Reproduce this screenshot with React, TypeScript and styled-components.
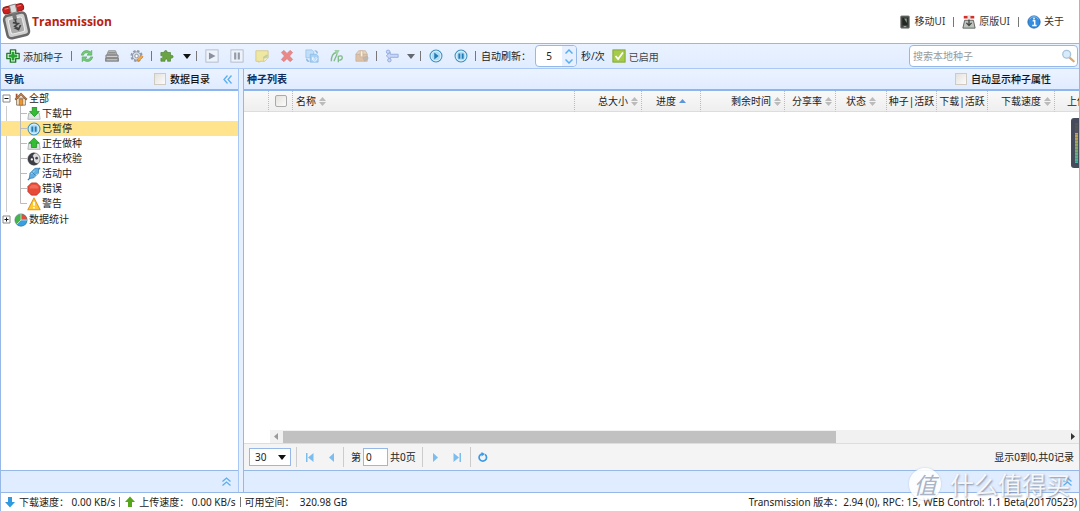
import React from "react";
import styled, { createGlobalStyle } from "styled-components";

const Global = createGlobalStyle`
  * { box-sizing: border-box; }
  html, body { margin: 0; padding: 0; background: #fff; }
  body, button, input, select {
    font-family: "Noto Sans", "Noto Sans CJK SC", sans-serif;
    font-size: 10px;
    color: #222;
  }
  svg { display: block; flex: none; }
`;

const Page = styled.div`
  position: relative;
  display: flex;
  flex-direction: column;
  min-height: 100vh;
  border-left: 1px solid #95b8e7;
  border-right: 1px solid #95b8e7;
  line-height: 15px;
  overflow: hidden;
`;

const Header = styled.header`
  display: flex;
  justify-content: space-between;
  height: 43px;
`;

const Brand = styled.div`
  display: flex;
  align-items: center;
  gap: 1px;
`;

const BrandName = styled.h1`
  margin: 0;
  font-family: "Open Sans", sans-serif;
  font-size: 12px;
  line-height: 18px;
  font-weight: 700;
  color: #b8200f;
`;

const TopLinks = styled.nav`
  display: flex;
  align-items: center;
  padding-right: 15px;
`;

const TopLink = styled.a`
  display: flex;
  align-items: center;
  gap: 3px;
  color: #333;
  text-decoration: none;
`;

const Separator = styled.span<{ $gap?: number }>`
  flex: none;
  width: 1px;
  height: 10px;
  margin: 0 ${(p) => p.$gap ?? 2}px;
  background: #777;
`;

const Toolbar = styled.div`
  display: flex;
  align-items: center;
  height: 26px;
  border-top: 1px solid #95b8e7;
  border-bottom: 1px solid #a9c8f5;
  background: linear-gradient(#eaf2ff, #e0ecff);
`;

const ToolButton = styled.button<{ $dim?: boolean; $width?: number }>`
  display: flex;
  align-items: center;
  justify-content: center;
  flex: none;
  width: ${(p) => p.$width ?? 25}px;
  height: 24px;
  padding: 0;
  border: 0;
  background: none;
  opacity: ${(p) => (p.$dim ? 0.6 : 1)};
`;

const AddButton = styled.button`
  display: flex;
  align-items: center;
  gap: 3px;
  padding: 0 6px 0 5px;
  border: 0;
  background: none;
  color: #333;
`;

const RefreshLabel = styled.label`
  width: 57px;
  padding-left: 3px;
`;

const Spinner = styled.div`
  display: flex;
  width: 42px;
  height: 22px;
  border: 1px solid #95b8e7;
  border-radius: 4px;
  background: #fff;
  overflow: hidden;
`;

const SpinnerInput = styled.input`
  width: 26px;
  padding: 0;
  border: 0;
  text-align: center;
  background: none;
`;

const SpinnerButtons = styled.div`
  display: flex;
  flex-direction: column;
  flex: 1;
  background: #e6f0ff;
`;

const SpinnerButton = styled.button`
  display: flex;
  flex: 1;
  align-items: center;
  justify-content: center;
  padding: 0;
  border: 0;
  background: none;
`;

const Unit = styled.span`
  margin: 0 7px 0 4px;
`;

const EnabledButton = styled.button`
  display: flex;
  align-items: center;
  gap: 3px;
  padding: 0;
  border: 0;
  background: none;
  color: #444;
`;

const SearchBox = styled.div`
  display: flex;
  align-items: center;
  width: 169px;
  height: 22px;
  margin-left: auto;
  margin-right: 1px;
  padding-right: 2px;
  border: 1px solid #95b8e7;
  border-radius: 4px;
  background: #fff;
`;

const SearchInput = styled.input`
  flex: 1;
  min-width: 0;
  padding: 0 0 0 3px;
  border: 0;
  background: none;
  &::placeholder { color: #999; }
`;

const Workspace = styled.div`
  display: flex;
  flex: 1;
  gap: 4px;
  background: #e6f0ff;
  border-bottom: 1px solid #95b8e7;
`;

const NavPanel = styled.aside`
  display: flex;
  flex-direction: column;
  flex: none;
  width: 238px;
  border-right: 1px solid #a9c8f5;
`;

const ListPanel = styled.main`
  display: flex;
  flex-direction: column;
  flex: 1;
  min-width: 0;
  border-left: 1px solid #95b8e7;
`;

const PanelHeader = styled.div`
  display: flex;
  align-items: center;
  height: 22px;
  padding: 0 6px 0 3px;
  border-bottom: 2px solid #8fb6ec;
  background: linear-gradient(#ecf3ff, #e0ecff);
`;

const PanelTitle = styled.h2`
  flex: 1;
  margin: 0;
  font-size: 10px;
  font-weight: 700;
  color: #0e2d5f;
`;

const CheckLabel = styled.label<{ $end: number }>`
  display: flex;
  align-items: center;
  gap: 4px;
  margin-right: ${(p) => p.$end}px;
  font-weight: 500;
  color: #111;
`;

const Check = styled.input<{ $tone?: string }>`
  appearance: none;
  display: block;
  width: 12px;
  height: 12px;
  margin: 0;
  border: 1px solid ${(p) => p.$tone ?? "#cfcac2"};
  border-radius: ${(p) => (p.$tone ? 2 : 0)}px;
  background: linear-gradient(135deg, #e4e2de, #fbfbfa);
`;

const IconButton = styled.button`
  display: flex;
  padding: 0;
  border: 0;
  background: none;
`;

const Tree = styled.ul`
  flex: 1;
  margin: 0;
  padding: 0;
  list-style: none;
  background: #fff;
`;

const Branch = styled.ul`
  margin: 0;
  padding: 0 0 1px;
  list-style: none;
  background: linear-gradient(#ccc, #ccc) 5px 0 / 1px 100% no-repeat;
`;

const TreeRow = styled.div<{ $selected?: boolean; $depth?: number }>`
  display: flex;
  align-items: center;
  height: 15px;
  padding-left: ${(p) => (p.$depth ? 19 : 1)}px;
  background: ${(p) => (p.$selected ? "#ffe48d" : "transparent")};
`;

const TreeLabel = styled.span`
  margin-left: 1px;
  white-space: nowrap;
`;

const CollapsedBar = styled.div`
  display: flex;
  align-items: center;
  justify-content: flex-end;
  height: 22px;
  padding-right: 7px;
  border-top: 1px solid #95b8e7;
  background: #e0ecff;
`;

const Grid = styled.div`
  flex: 1;
  overflow: hidden;
  background: #fff;
`;

const Table = styled.table`
  table-layout: fixed;
  width: 877px;
  border-collapse: separate;
  border-spacing: 0;
`;

const HeadCell = styled.th`
  height: 21px;
  padding: 0 3px;
  border-right: 1px dotted #bbb;
  border-bottom: 1px solid #ddd;
  background: linear-gradient(#f9f9f9, #efefef);
  font-weight: 400;
  white-space: nowrap;
`;

const HeadContent = styled.span<{ $justify?: string }>`
  display: flex;
  align-items: center;
  justify-content: ${(p) => p.$justify ?? "flex-start"};
  gap: 3px;
`;

const ScrollTrack = styled.div`
  display: flex;
  align-items: center;
  height: 13px;
  margin-left: 26px;
  background: #f1f1f1;
`;

const ScrollArrow = styled.button`
  display: flex;
  align-items: center;
  justify-content: center;
  width: 13px;
  height: 13px;
  padding: 0;
  border: 0;
  background: none;
`;

const ScrollRail = styled.div`
  display: grid;
  grid-template-columns: 12fr 5fr;
  flex: 1;
  height: 12px;
`;

const ScrollThumb = styled.div`
  background: #c1c1c1;
`;

const ScrollRow = styled.div`
  background: #fff;
`;

const Pager = styled.div`
  display: flex;
  align-items: center;
  height: 27px;
  padding: 0 5px;
  border-top: 1px solid #ddd;
  background: #f4f4f4;
`;

const PageSize = styled.div`
  position: relative;
  display: flex;
  align-items: center;
`;

const PageSizeSelect = styled.select`
  appearance: none;
  width: 42px;
  height: 18px;
  padding: 0 5px;
  border: 1px solid #95b8e7;
  border-radius: 0;
  background: #fff;
`;

const SelectCaret = styled.span`
  position: absolute;
  right: 5px;
  pointer-events: none;
`;

const PagerLine = styled.span<{ $before?: number; $after?: number }>`
  width: 1px;
  height: 20px;
  margin: 0 ${(p) => p.$after ?? 0}px 0 ${(p) => p.$before ?? 0}px;
  background: #ccc;
`;

const PagerButton = styled.button`
  display: flex;
  align-items: center;
  justify-content: center;
  width: 22px;
  height: 22px;
  padding: 0;
  border: 0;
  background: none;
`;

const PageInput = styled.input`
  width: 25px;
  height: 18px;
  margin: 0 2px;
  padding: 0 2px;
  border: 1px solid #95b8e7;
`;

const PagerInfo = styled.span`
  margin-left: auto;
`;

const StatusBar = styled.footer`
  display: flex;
  align-items: center;
  height: 18px;
  padding: 0 2px 0 3px;
  background: #fff;
`;

const StatusItem = styled.span`
  display: flex;
  align-items: center;
  gap: 3px;
  white-space: pre;
`;

const Version = styled.span`
  margin-left: auto;
`;

const Meter = styled.div`
  position: absolute;
  top: 118px;
  right: -1px;
  width: 9px;
  height: 50px;
  padding: 5px 2px 5px 4px;
  border-radius: 3px 0 0 3px;
  background: #454b5b;
`;

const MeterBar = styled.div`
  height: 100%;
  background: repeating-linear-gradient(transparent 0 2px, #454b5b44 2px 3px),
    linear-gradient(#555 0 24%, #cfa04a 26%, #8ba85c 60%, #3fb5a0);
`;

const Watermark = styled.div`
  position: absolute;
  right: 9px;
  bottom: 10px;
  display: flex;
  align-items: center;
  gap: 9px;
  height: 34px;
  font-family: "Noto Sans CJK SC", sans-serif;
  font-size: 24px;
  line-height: 32px;
  color: #ffffffe0;
  text-shadow: 1px 1px 2px #7f8ea5;
  pointer-events: none;
`;

const WatermarkDisc = styled.span`
  width: 32px;
  height: 32px;
  border-radius: 50%;
  background: #ffffffe0;
  box-shadow: 0 0 2px #b8c5da;
  color: #a9b4c6;
  font-size: 23px;
  font-style: italic;
  text-align: center;
  text-shadow: none;
`;

type Kind =
  | "add" | "refresh" | "drive" | "gear" | "puzzle" | "play" | "pause" | "note"
  | "remove" | "recheck" | "announce" | "box" | "queue" | "startAll" | "pauseAll"
  | "ok" | "search" | "phone" | "classic" | "info" | "home" | "down" | "up"
  | "verify" | "active" | "error" | "warning" | "pie";

const drawings: Record<Kind, React.ReactNode> = {
  add: (
    <>
      <path d="M5 1h6v4h4v6h-4v4H5v-4H1V5h4z" fill="#fff" stroke="#237a2b" strokeWidth="1.6" strokeLinejoin="round" />
      <path d="M6.4 3h3.2v3.4H13v3.2H9.6V13H6.4V9.600H3V6.400h3.400z" fill="#25a52f" />
    </>
  ),
  refresh: (
    <g stroke="#43a047" strokeWidth=".6" fill="#75ca7a">
      <path d="M1.500 7C2 3.500 5 1.500 8 1.800c1.500.1 2.800.7 3.700 1.500L13.500 1.500V7H8l1.800-1.800C8 3.700 5 4 4 7z" />
      <path d="M14.500 9c-.5 3.500-3.500 5.500-6.500 5.200-1.500-.1-2.800-.7-3.700-1.500L2.500 14.500V9H8l-1.800 1.800C8 12.300 11 12 12 9z" />
    </g>
  ),
  drive: (
    <g stroke="#747474" strokeWidth=".8">
      <path d="M4 2h8l2 5H2z" fill="#c6c6c6" />
      <path d="M4 4h8M3.300 5.700h9.400" />
      <path d="M1 7h14v3H1z" fill="#aaa" />
      <path d="M.500 10.500h15V14H.500z" fill="#929292" />
      <path d="M2 8.500h12M2 12.300h12" stroke="#e2e2e2" />
    </g>
  ),
  gear: (
    <>
      <circle cx="7.500" cy="8" r="5.800" fill="none" stroke="#929cab" strokeWidth="2.400" strokeDasharray="2.700 1.850" />
      <circle cx="7.500" cy="8" r="4.800" fill="#d5dbe3" stroke="#8390a3" />
      <circle cx="7.500" cy="8" r="2" fill="#fff" stroke="#8390a3" />
      <path d="m8 14 .6-2.700L13 7l2 2-4.500 4.300z" fill="#f5aa3d" stroke="#ce7329" strokeWidth=".6" />
    </>
  ),
  puzzle: (
    <path d="M1 4h4c-1-3 4-3 3 0h4v3.500c4-1.500 4 4 0 2.800V14H8.500c1-3.500-3.500-3.500-2.700 0H1v-3.500c3 .8 3-3.500 0-2.700z" fill="#6ba543" stroke="#467b2d" strokeWidth=".7" />
  ),
  play: (
    <>
      <rect x="1" y="1" width="14" height="14" fill="#f4f6fa" stroke="#8e96a3" />
      <path d="M4.500 4v8l7.500-4z" fill="#4d545f" />
    </>
  ),
  pause: (
    <>
      <rect x="1" y="1" width="14" height="14" fill="#f4f6fa" stroke="#8e96a3" />
      <path d="M4.700 4h2.500v8H4.700zM8.800 4h2.500v8H8.800z" fill="#5d6470" />
    </>
  ),
  note: (
    <>
      <path d="M1 2h14v8l-4 4H7l-3 1v-1H1z" fill="#f7e263" stroke="#c8ae42" />
      <path d="M10 14v-4h5" fill="#fff6b4" stroke="#c8ae42" />
      <path d="m9 9 5-3 1 2-5 3z" fill="#a8bb67" />
    </>
  ),
  remove: (
    <path d="m1.500 4 3-2.500L8 5l3.500-3.500 3 2.500L11 8l3.500 4-3 2.500L8 11l-3.500 3.500-3-2.500L5 8z" fill="#ee4338" stroke="#c72e29" strokeWidth=".6" />
  ),
  recheck: (
    <>
      <path d="M1 1h7l2 2v7H1z" fill="#a9d4f5" stroke="#5aa2dc" strokeWidth=".8" />
      <path d="M6 6h7l2 2v7H6z" fill="#7fc0f0" stroke="#4993d2" strokeWidth=".8" />
      <path d="M11 2c2 0 3 1 3 3M2 11c0 2 1 3 3 3" fill="none" stroke="#3f8fd4" strokeWidth="1.400" />
      <path d="M9 9v2.500h3M12.300 9.200a2.500 2.500 0 1 1-3 .3" fill="none" stroke="#fff" />
    </>
  ),
  announce: (
    <g fill="none" stroke="#3f9a38" strokeWidth="1.500">
      <path d="M1.500 14C1.500 9 3 5 7 4" />
      <path d="M5 1h6l-3 6z" fill="#73bd65" stroke="none" />
      <path d="M4.500 14 8 6M9.500 15V8.500c5-2.500 6.500 3 1 4.500" />
    </g>
  ),
  box: (
    <g stroke="#b48454" strokeWidth=".8">
      <path d="M1 6h13v8H1z" fill="#dba56b" />
      <path d="m1 6 3-4h8l2 4z" fill="#edc293" />
      <path d="M6 2h3v7H6z" fill="#fff0cf" />
      <path d="m9 10 5-2 1 3-4 3z" fill="#9c9584" />
    </g>
  ),
  queue: (
    <g stroke="#5a79c8" fill="#b6c8f0">
      <path d="M6 6h9v3.500H6V12L1.500 7.800 6 3.500z" />
      <circle cx="3.500" cy="3.200" r="2" />
      <circle cx="5" cy="12.800" r="2" />
    </g>
  ),
  startAll: (
    <>
      <circle cx="8" cy="8" r="6.800" fill="#eaf6fe" stroke="#3e8fbd" strokeWidth="1.200" />
      <circle cx="8" cy="8" r="5.200" fill="#b1dcf5" />
      <path d="M6 4v8l5-4z" fill="#237db5" />
    </>
  ),
  pauseAll: (
    <>
      <circle cx="8" cy="8" r="6.800" fill="#eaf6fe" stroke="#3e8fbd" strokeWidth="1.200" />
      <circle cx="8" cy="8" r="5.200" fill="#b1dcf5" />
      <path d="M5 5h2.200v6H5zM8.800 5H11v6H8.800z" fill="#237db5" />
    </>
  ),
  ok: (
    <>
      <rect x="1" y="1" width="14" height="14" fill="#a6cb48" stroke="#7ba32d" />
      <path d="m4 8 3 3.500L12.500 4" fill="none" stroke="#fff" strokeWidth="2" />
    </>
  ),
  search: (
    <>
      <path d="m9.500 9.500 5 4.500" stroke="#d9a970" strokeWidth="2.500" strokeLinecap="round" />
      <circle cx="6.500" cy="6" r="4.500" fill="#d7ebfa" stroke="#a8c3dd" strokeWidth="1.500" />
    </>
  ),
  phone: (
    <>
      <rect x="3" y="1" width="10" height="14" rx="1" fill="#434743" stroke="#898b88" />
      <rect x="5" y="3.500" width="6" height="8" fill="#242724" />
      <path d="M7 4h3v5z" fill="#8ea090" />
      <path d="M6.500 13.300h3" stroke="#bbb" />
    </>
  ),
  classic: (
    <>
      <path d="M3 6h10l2 9H1z" fill="#bfc3bd" stroke="#535953" />
      <path d="M2 1h12v3H2z" fill="#d52f26" />
      <path d="M6.300 1h3.400v4H6.300z" fill="#e3e3e3" />
      <path d="M8 5v6M5 9l3 3 3-3" fill="none" stroke="#424742" strokeWidth="1.500" />
    </>
  ),
  info: (
    <>
      <circle cx="8" cy="8" r="7" fill="#348dde" stroke="#2767ab" />
      <path d="M3 5c2-4 8-4 10 0" stroke="#89c4f2" fill="none" />
      <path d="M6.500 6.500h2.300v5M6 12h5M8 3.200v2" stroke="#fff" strokeWidth="1.700" fill="none" />
    </>
  ),
  home: (
    <>
      <path d="M3 7h10v8H3z" fill="#f6e9d2" stroke="#84705d" />
      <path d="M8 1 1 8l1.200 1.200L8 3.800l5.800 5.400L15 8z" fill="#b77c48" stroke="#734825" strokeWidth=".7" />
      <path d="M6 8h4v7H6z" fill="#f0972c" stroke="#99632b" strokeWidth=".8" />
      <path d="M2 2h2v3L2 7z" fill="#9c5435" />
    </>
  ),
  down: (
    <>
      <path d="M2 7h12l1 7H1z" fill="#e3e6e6" stroke="#a8adad" />
      <path d="M6 0h5v5h3l-5.500 6L3 5h3z" fill="#32bd32" stroke="#158419" strokeWidth=".8" />
    </>
  ),
  up: (
    <>
      <path d="M2 7h12l1 7H1z" fill="#e3e6e6" stroke="#a8adad" />
      <path d="m8 1 6 6h-3v5H5V7H2z" fill="#32bd32" stroke="#158419" strokeWidth=".8" />
    </>
  ),
  verify: (
    <>
      <circle cx="8" cy="8" r="7" fill="#dedee2" stroke="#62626a" strokeWidth=".8" />
      <path d="M3 3a7 7 0 0 0 10 10c-3 .5-5.500-1.500-5-4.500C8.500 5.500 5.500 3 3 3z" fill="#3d3d46" />
      <path d="M3 3a7 7 0 0 1 7-1.700C7 1.500 8 4 6 4.500z" fill="#3d3d46" />
      <circle cx="5.500" cy="8.500" r="1.300" fill="#fff" />
      <circle cx="11" cy="7" r="1.500" fill="#44444c" />
    </>
  ),
  active: (
    <>
      <path d="m1 15 3-3M12 4l3-3" stroke="#3c80b1" strokeWidth="1.500" />
      <path d="m2.500 13 1-6 5.500-5.500h4.500L13 7l-5.500 5.500z" fill="#5eafe3" stroke="#3078ad" strokeWidth=".8" />
      <path d="m5 8 4-4M9 10.500l3-3" stroke="#b9e0f8" />
      <path d="m6 6 4 4" stroke="#286f9f" strokeWidth=".8" />
    </>
  ),
  error: (
    <>
      <path d="M5 1h6l4 4v6l-4 4H5l-4-4V5z" fill="#e84a38" stroke="#ba3026" strokeWidth=".8" />
      <path d="M5.500 3h5L13 5.500v2H3v-2z" fill="#f47c68" opacity=".7" />
    </>
  ),
  warning: (
    <>
      <path d="m8 1 7 13.500H1z" fill="#ffc934" stroke="#dc9821" strokeWidth="1.200" strokeLinejoin="round" />
      <path d="M8 5.500v4.500M8 11.500v1.700" stroke="#fff" strokeWidth="2" />
    </>
  ),
  pie: (
    <>
      <circle cx="8" cy="8" r="7" fill="#46b549" />
      <path d="M8 8 3 13A7 7 0 0 0 15 8z" fill="#37a0e3" />
      <path d="M8 8h7A7 7 0 0 0 8 1z" fill="#e44c3b" />
      <circle cx="8" cy="8" r="7" fill="none" stroke="#43777a" strokeWidth=".7" />
      <path d="M8 1v7h7M8 8l-5 5" stroke="#e8f2ef" strokeWidth=".8" fill="none" />
    </>
  ),
};

const Icon = ({ kind, size = 14 }: { kind: Kind; size?: number }) => (
  <svg width={size} height={size} viewBox="0 0 16 16" aria-hidden="true">
    {drawings[kind]}
  </svg>
);

const Logo = () => (
  <svg width="30" height="38" viewBox="0 0 30 38" aria-hidden="true">
    <g transform="rotate(-13 15 20)">
      <rect x="4" y="11" width="22" height="23" rx="4" fill="#d0d0d0" stroke="#686868" strokeWidth="2.500" />
      <rect x="8" y="15" width="14" height="15" rx="2" fill="#aaa" stroke="#eee" />
      <path d="M13 8h4v9h-4z" fill="#747474" />
      <path d="M15 16v4M12 19l5 2-4 2 3 3M12 24l4 3 3-4" fill="none" stroke="#444" strokeWidth="1.700" />
      <rect x="5" y="2" width="21" height="7" rx="3" fill="#ca211f" stroke="#8d1a18" />
      <path d="M12.500 1.500h6v8h-6z" fill="#ddd" stroke="#888" />
      <path d="M7 4h4M20 4h4" stroke="#ee8a80" />
    </g>
  </svg>
);

const Caret = ({ color = "#111" }: { color?: string }) => (
  <svg width="8" height="5" viewBox="0 0 8 5" aria-hidden="true"><path d="M0 0h8L4 5z" fill={color} /></svg>
);

const Sort = ({ active }: { active?: boolean }) => (
  <svg width="7" height="9" viewBox="0 0 7 9" aria-hidden="true">
    {active ? <path d="m0 6 3.500-4L7 6z" fill="#5b95dc" /> : <path d="m0 4 3.500-4L7 4zM0 5h7L3.500 9z" fill="#bbb" />}
  </svg>
);

const Chevrons = ({ turn }: { turn?: boolean }) => (
  <svg width="9" height="9" viewBox="0 0 9 9" fill="none" stroke="#5aaef0" strokeWidth="1.300" aria-hidden="true">
    <path d={turn ? "M4.500.500 1 4.500l3.500 4M8.500.500 5 4.500l3.500 4" : "m.500 4.500 4-3.500 4 3.500M.500 8.500l4-3.500 4 3.500"} />
  </svg>
);

const Arrow = ({ d, color = "#7cbdf0" }: { d: string; color?: string }) => (
  <svg width="9" height="9" viewBox="0 0 9 9" aria-hidden="true"><path d={d} fill={color} /></svg>
);

const Expander = ({ open }: { open?: boolean }) => (
  <svg width="12" height="9" viewBox="0 0 12 9" fill="none" aria-hidden="true">
    <path d="M1 1h7v7H1z" fill="#fff" stroke="#888" />
    <path d={open ? "M2.500 4.500h4" : "M2.500 4.500h4M4.500 2.500v4"} stroke="#111" />
  </svg>
);

const Connector = ({ last }: { last?: boolean }) => (
  <svg width="7" height="15" viewBox="0 0 7 15" fill="none" stroke="#bbb" aria-hidden="true">
    <path d={last ? "M.500 0v7.500H7" : "M.500 0v15M.500 7.500H7"} />
  </svg>
);

const navItems: { label: string; kind: Kind; selected?: boolean }[] = [
  { label: "下载中", kind: "down" },
  { label: "已暂停", kind: "pauseAll", selected: true },
  { label: "正在做种", kind: "up" },
  { label: "正在校验", kind: "verify" },
  { label: "活动中", kind: "active" },
  { label: "错误", kind: "error" },
  { label: "警告", kind: "warning" },
];

const torrentTools: { title: string; kind: Kind }[] = [
  { title: "开始", kind: "play" },
  { title: "暂停", kind: "pause" },
  { title: "重命名", kind: "note" },
  { title: "删除", kind: "remove" },
  { title: "重新校验", kind: "recheck" },
  { title: "获取更多节点", kind: "announce" },
  { title: "变更目录", kind: "box" },
];

const columns: { label: string; width: number; justify?: string; sort?: "none" | "asc" }[] = [
  { label: "名称", width: 282, sort: "none" },
  { label: "总大小", width: 67, justify: "flex-end", sort: "none" },
  { label: "进度", width: 59, justify: "center", sort: "asc" },
  { label: "剩余时间", width: 84, justify: "flex-end", sort: "none" },
  { label: "分享率", width: 51, justify: "flex-end", sort: "none" },
  { label: "状态", width: 51, justify: "center", sort: "none" },
  { label: "种子|活跃", width: 50, justify: "center" },
  { label: "下载|活跃", width: 51, justify: "center" },
  { label: "下载速度", width: 67, justify: "flex-end", sort: "none" },
  { label: "上传速度", width: 66, justify: "flex-end", sort: "none" },
];

export default function App() {
  return (
    <Page>
      <Global />
      <Header>
        <Brand><Logo /><BrandName>Transmission</BrandName></Brand>
        <TopLinks>
          <TopLink href="#mobile"><Icon kind="phone" />移动UI</TopLink>
          <Separator $gap={8} />
          <TopLink href="#classic"><Icon kind="classic" />原版UI</TopLink>
          <Separator $gap={8} />
          <TopLink href="#about"><Icon kind="info" />关于</TopLink>
        </TopLinks>
      </Header>

      <Toolbar>
        <AddButton><Icon kind="add" />添加种子</AddButton>
        <Separator />
        <ToolButton title="刷新"><Icon kind="refresh" /></ToolButton>
        <ToolButton title="限速"><Icon kind="drive" /></ToolButton>
        <ToolButton title="设置"><Icon kind="gear" /></ToolButton>
        <Separator />
        <ToolButton title="插件"><Icon kind="puzzle" /></ToolButton>
        <ToolButton title="插件菜单" $width={15}><Caret /></ToolButton>
        <Separator />
        {torrentTools.map((t) => (
          <ToolButton key={t.title} title={t.title} $dim><Icon kind={t.kind} /></ToolButton>
        ))}
        <Separator />
        <ToolButton title="队列" $dim><Icon kind="queue" /></ToolButton>
        <ToolButton title="队列菜单" $dim $width={14}><Caret /></ToolButton>
        <Separator />
        <ToolButton title="全部开始"><Icon kind="startAll" /></ToolButton>
        <ToolButton title="全部暂停"><Icon kind="pauseAll" /></ToolButton>
        <Separator />
        <RefreshLabel htmlFor="interval">自动刷新：</RefreshLabel>
        <Spinner>
          <SpinnerInput id="interval" defaultValue="5" />
          <SpinnerButtons>
            <SpinnerButton aria-label="增加">
              <svg width="8" height="5" fill="none" stroke="#5aaef0" strokeWidth="1.500"><path d="m.500 4.500 3.500-3.500 3.500 3.500" /></svg>
            </SpinnerButton>
            <SpinnerButton aria-label="减少">
              <svg width="8" height="5" fill="none" stroke="#5aaef0" strokeWidth="1.500"><path d="m.500.500 3.500 3.500 3.500-3.500" /></svg>
            </SpinnerButton>
          </SpinnerButtons>
        </Spinner>
        <Unit>秒/次</Unit>
        <EnabledButton><Icon kind="ok" />已启用</EnabledButton>
        <SearchBox>
          <SearchInput placeholder="搜索本地种子" aria-label="搜索本地种子" />
          <IconButton aria-label="搜索"><Icon kind="search" /></IconButton>
        </SearchBox>
      </Toolbar>

      <Workspace>
        <NavPanel>
          <PanelHeader>
            <PanelTitle>导航</PanelTitle>
            <CheckLabel $end={13}><Check type="checkbox" />数据目录</CheckLabel>
            <IconButton aria-label="收起导航"><Chevrons turn /></IconButton>
          </PanelHeader>
          <Tree>
            <li>
              <TreeRow><Expander open /><Icon kind="home" /><TreeLabel>全部</TreeLabel></TreeRow>
              <Branch>
                {navItems.map((n, i) => (
                  <li key={n.label}>
                    <TreeRow $depth={1} $selected={n.selected}>
                      <Connector last={i === navItems.length - 1} />
                      <Icon kind={n.kind} />
                      <TreeLabel>{n.label}</TreeLabel>
                    </TreeRow>
                  </li>
                ))}
              </Branch>
            </li>
            <li>
              <TreeRow><Expander /><Icon kind="pie" /><TreeLabel>数据统计</TreeLabel></TreeRow>
            </li>
          </Tree>
          <CollapsedBar><IconButton aria-label="展开"><Chevrons /></IconButton></CollapsedBar>
        </NavPanel>

        <ListPanel>
          <PanelHeader>
            <PanelTitle>种子列表</PanelTitle>
            <CheckLabel $end={22}><Check type="checkbox" />自动显示种子属性</CheckLabel>
          </PanelHeader>
          <Grid>
            <Table>
              <colgroup>
                <col style={{ width: 25 }} />
                <col style={{ width: 24 }} />
                {columns.map((c) => <col key={c.label} style={{ width: c.width }} />)}
              </colgroup>
              <thead>
                <tr>
                  <HeadCell aria-label="序号" />
                  <HeadCell>
                    <HeadContent $justify="center"><Check type="checkbox" $tone="#aaa" aria-label="全选" /></HeadContent>
                  </HeadCell>
                  {columns.map((c) => (
                    <HeadCell key={c.label}>
                      <HeadContent $justify={c.justify}>
                        {c.label}
                        {c.sort && <Sort active={c.sort === "asc"} />}
                      </HeadContent>
                    </HeadCell>
                  ))}
                </tr>
              </thead>
            </Table>
          </Grid>
          <ScrollRow>
            <ScrollTrack>
              <ScrollArrow aria-label="向左滚动"><Arrow d="M6 1v7L2 4.500z" color="#999" /></ScrollArrow>
              <ScrollRail><ScrollThumb /></ScrollRail>
              <ScrollArrow aria-label="向右滚动"><Arrow d="M3 1v7l4-3.500z" color="#333" /></ScrollArrow>
            </ScrollTrack>
          </ScrollRow>
          <Pager>
            <PageSize>
              <PageSizeSelect aria-label="每页记录数" defaultValue="30"><option>30</option></PageSizeSelect>
              <SelectCaret><Caret /></SelectCaret>
            </PageSize>
            <PagerLine $before={5} $after={1} />
            <PagerButton aria-label="首页"><Arrow d="M1 0h1.500v9H1zM8.500 0v9L3 4.500z" /></PagerButton>
            <PagerButton aria-label="上一页"><Arrow d="M7 0v9L2 4.500z" /></PagerButton>
            <PagerLine $before={1} $after={7} />
            <label htmlFor="page">第</label>
            <PageInput id="page" defaultValue="0" />
            <span>共0页</span>
            <PagerLine $before={6} $after={2} />
            <PagerButton aria-label="下一页"><Arrow d="M2 0v9l5-4.500z" /></PagerButton>
            <PagerButton aria-label="末页"><Arrow d="M.500 0v9L6 4.500zM6.500 0H8v9H6.500z" /></PagerButton>
            <PagerLine $before={1} $after={1} />
            <PagerButton aria-label="刷新列表">
              <svg width="10" height="10" viewBox="0 0 10 10"><path d="M7 2.400A3.700 3.700 0 1 1 4 1.800" fill="none" stroke="#3c9be6" strokeWidth="1.700" /><path d="M3.500 0v4.500l3.500-2.500z" fill="#3c9be6" /></svg>
            </PagerButton>
            <PagerInfo>显示0到0,共0记录</PagerInfo>
          </Pager>
          <CollapsedBar><IconButton aria-label="展开属性"><Chevrons /></IconButton></CollapsedBar>
        </ListPanel>
      </Workspace>

      <StatusBar>
        <StatusItem>
          <svg width="12" height="12" viewBox="0 0 12 12" aria-hidden="true"><path d="M4 1h4v5h3l-5 5.500L1 6h3z" fill="#2f9ae0" /></svg>
          {"下载速度： 0.00 KB/s"}
        </StatusItem>
        <Separator $gap={4} />
        <StatusItem>
          <svg width="12" height="12" viewBox="0 0 12 12" aria-hidden="true"><path d="M4 11h4V6h3L6 .500 1 6h3z" fill="#57a51b" /></svg>
          {"上传速度： 0.00 KB/s"}
        </StatusItem>
        <Separator $gap={4} />
        <StatusItem>{"可用空间：  320.98 GB"}</StatusItem>
        <Version>Transmission 版本：2.94 (0), RPC: 15, WEB Control: 1.1 Beta(20170523)</Version>
      </StatusBar>

      <Meter><MeterBar /></Meter>
      <Watermark><WatermarkDisc>值</WatermarkDisc>什么值得买</Watermark>
    </Page>
  );
}
